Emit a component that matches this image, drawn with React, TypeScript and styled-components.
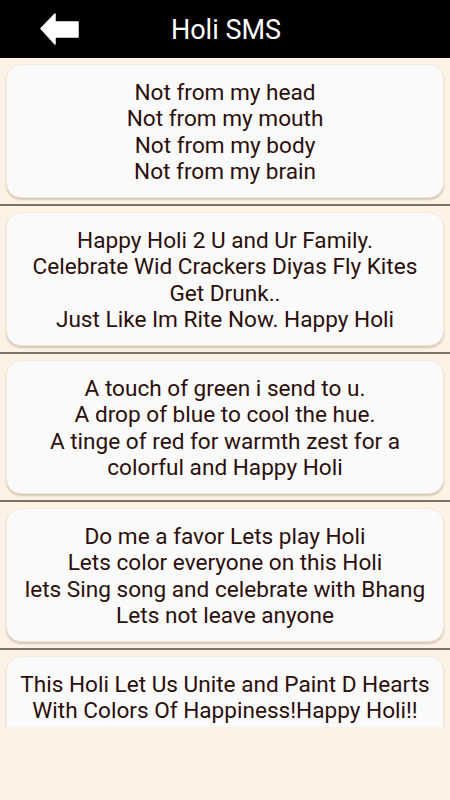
import React from 'react';
import styled, { createGlobalStyle } from 'styled-components';

const messages: string[][] = [
  ['Not from my head', 'Not from my mouth', 'Not from my body', 'Not from my brain'],
  [
    'Happy Holi 2 U and Ur Family.',
    'Celebrate Wid Crackers Diyas Fly Kites',
    'Get Drunk..',
    'Just Like Im Rite Now. Happy Holi',
  ],
  [
    'A touch of green i send to u.',
    'A drop of blue to cool the hue.',
    'A tinge of red for warmth zest for a',
    'colorful and Happy Holi',
  ],
  [
    'Do me a favor Lets play Holi',
    'Lets color everyone on this Holi',
    'lets Sing song and celebrate with Bhang',
    'Lets not leave anyone',
  ],
  ['This Holi Let Us Unite and Paint D Hearts', 'With Colors Of Happiness!Happy Holi!!', '', ''],
];

const GlobalStyle = createGlobalStyle`
  html, body {
    margin: 0;
    padding: 0;
    background: #fdf2e5;
  }
  body {
    font-family: Roboto, "Noto Sans", sans-serif;
  }
`;

const App: React.FC = () => {
  return (
    <Screen>
      <GlobalStyle />
      <Toolbar>
        <BackButton aria-label="back">
          <svg width="40" height="32" viewBox="0 0 40 32">
            <path
              d="M1 15.5 L15 1 L15 9 L38 9 L38 24 L15 24 L15 31 Z"
              fill="#fff"
              stroke="#fff"
              strokeWidth="1.5"
              strokeLinejoin="round"
            />
          </svg>
        </BackButton>
        <Title>Holi SMS</Title>
      </Toolbar>
      <List>
        {messages.map((lines, i) => (
          <Item key={i}>
            <Card>
              {lines.map((line, j) => (
                <Line key={j}>{line}</Line>
              ))}
            </Card>
            <Divider />
          </Item>
        ))}
      </List>
    </Screen>
  );
};

const Screen = styled.div`
  width: 450px;
  min-height: 800px;
  background: #fdf2e5;
`;

const Toolbar = styled.header`
  position: relative;
  height: 58px;
  background: #000;
  display: flex;
  align-items: center;
  justify-content: center;
`;

const BackButton = styled.button`
  position: absolute;
  left: 40px;
  top: 13px;
  padding: 0;
  border: none;
  background: none;
  display: flex;
  cursor: pointer;
`;

const Title = styled.h1`
  margin: 0 0 0 2px;
  padding-top: 2px;
  color: #fff;
  font-size: 27px;
  font-weight: 400;
  font-family: Roboto, sans-serif;
`;

const List = styled.div`
  height: 669px;
  overflow: hidden;
`;

const Item = styled.div`
  display: flex;
  flex-direction: column;
`;

const Card = styled.div`
  margin: 6px 6px;
  padding: 15px 4px;
  height: 134px;
  box-sizing: border-box;
  background: #fafafa;
  border: 1px solid #f3e8dc;
  border-radius: 15px;
  box-shadow: 0 2px 2px rgba(120, 95, 70, 0.3);
  display: flex;
  flex-direction: column;
  align-items: center;
`;

const Line = styled.div`
  font-size: 22.6px;
  line-height: 26.3px;
  min-height: 26.3px;
  color: #2b0f0c;
  text-align: center;
  white-space: nowrap;
`;

const Divider = styled.div`
  height: 2px;
  background: #7d7365;
`;

export default App;
